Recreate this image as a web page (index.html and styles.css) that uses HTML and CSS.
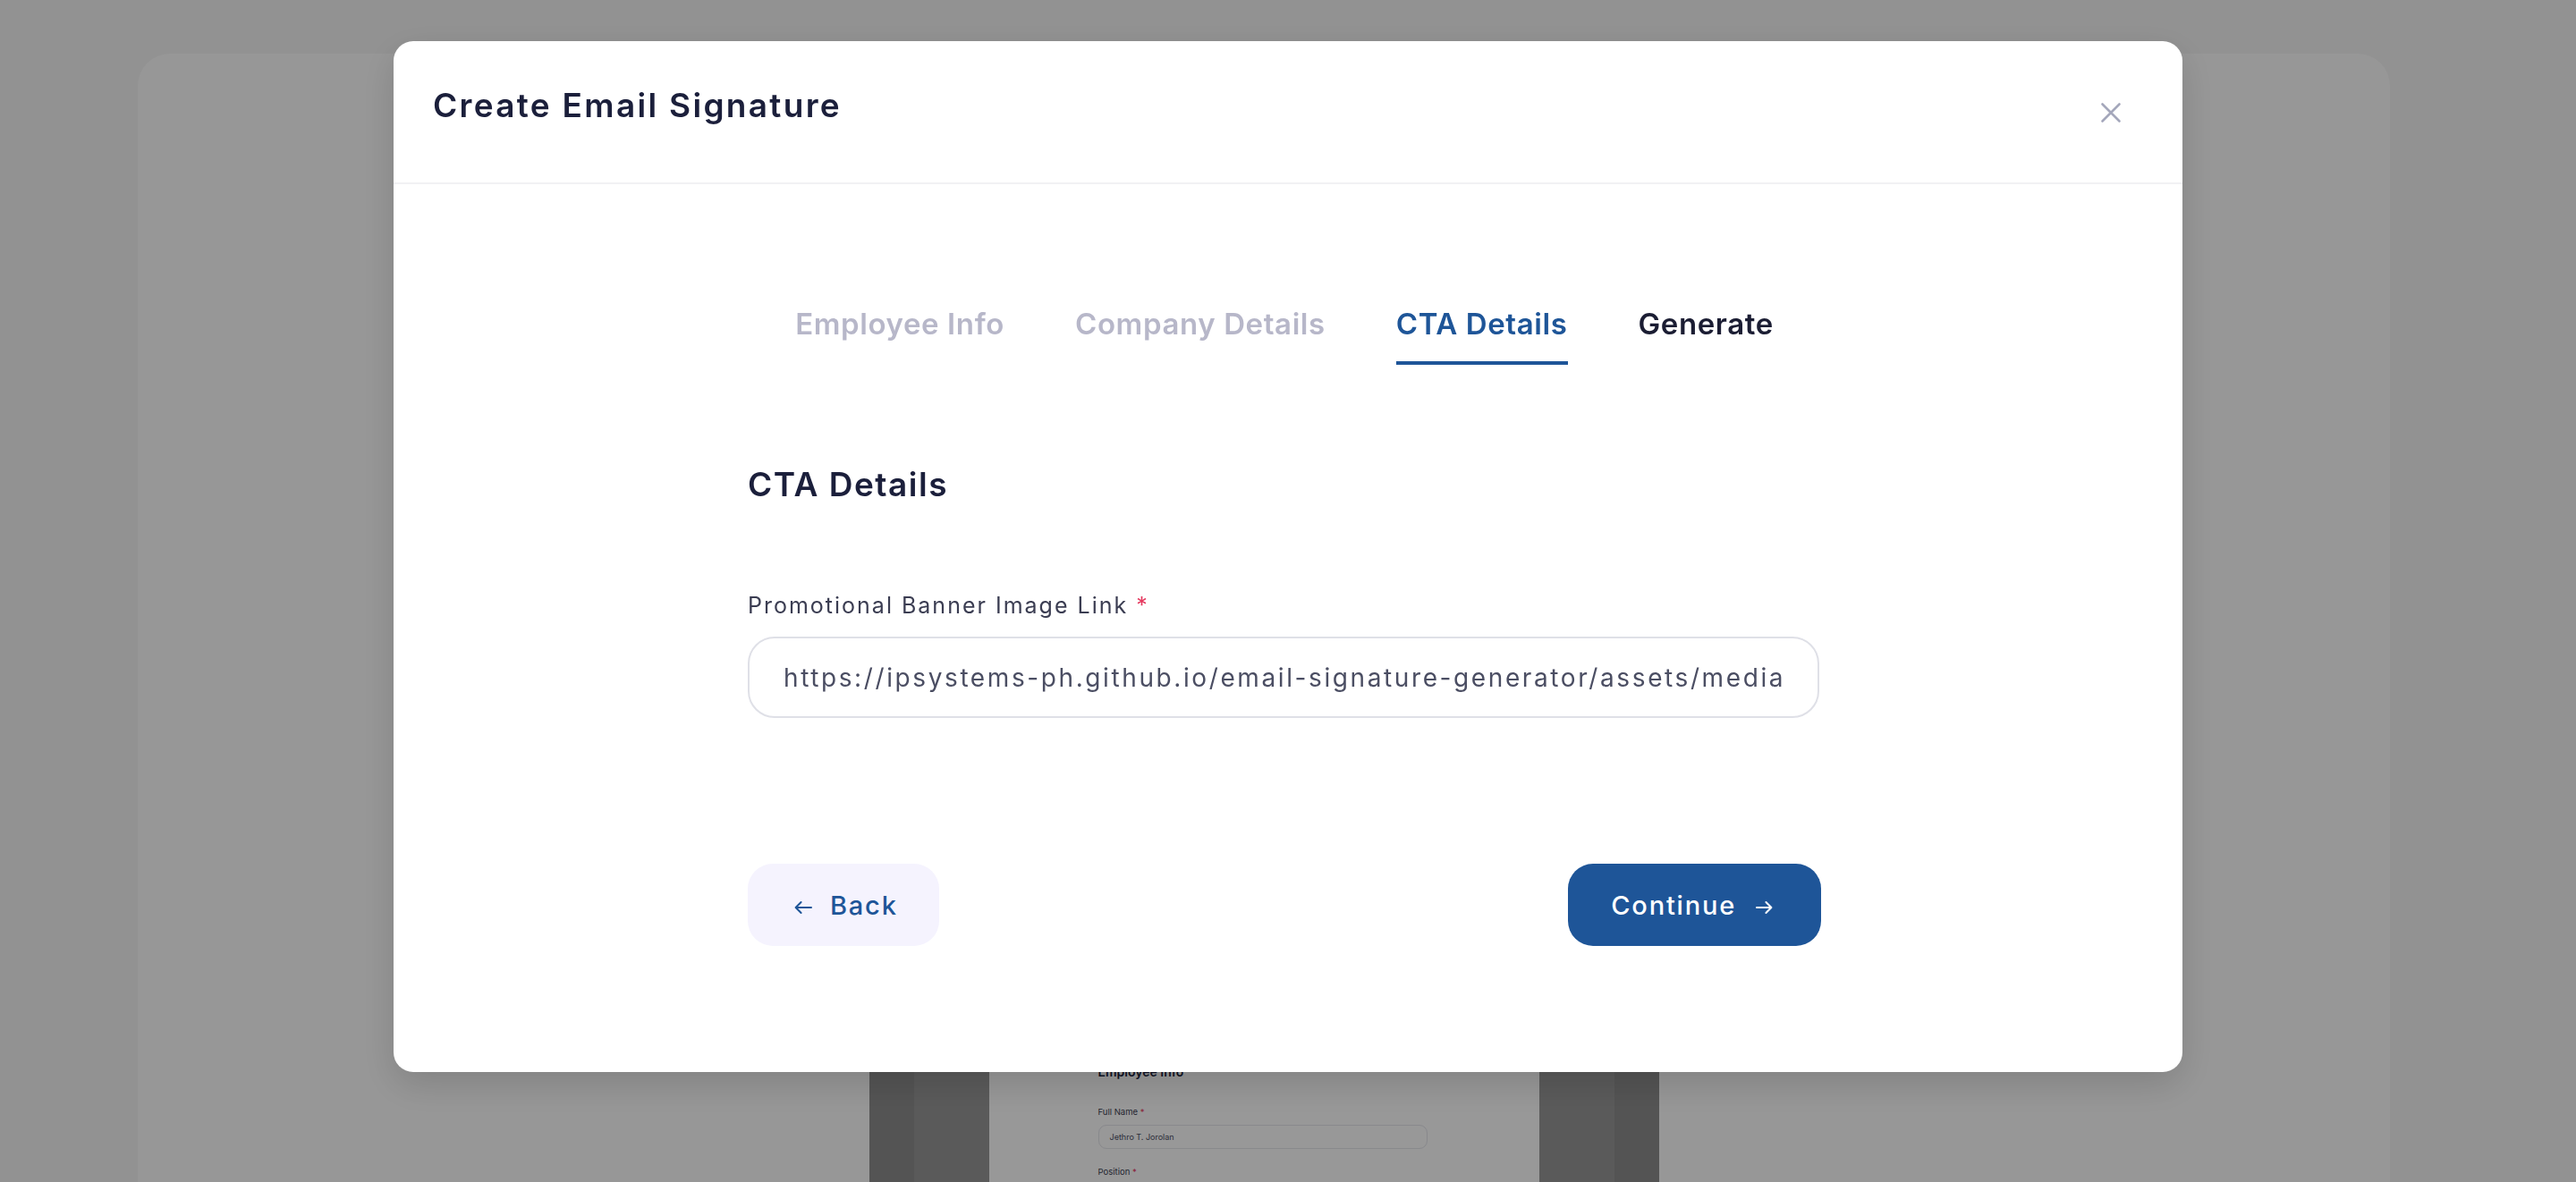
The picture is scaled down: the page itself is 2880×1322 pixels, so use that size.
FILE: index.html
```html
<!DOCTYPE html>
<html lang="en">
<head>
<meta charset="utf-8">
<title>Create Email Signature</title>
<link rel="stylesheet" href="styles.css">
</head>
<body>
<div class="page">
  <div class="card">
    <div class="preview">
      <div class="strip strip-outer"></div>
      <div class="strip strip-inner"></div>
      <div class="paper">
        <div class="p-heading">Employee Info</div>
        <div class="p-label">Full Name <span class="p-req">*</span></div>
        <div class="p-input">Jethro T. Jorolan</div>
        <div class="p-label p-label-2">Position <span class="p-req">*</span></div>
      </div>
      <div class="strip strip-inner"></div>
      <div class="strip strip-outer"></div>
    </div>
  </div>
</div>

<div class="overlay">
  <div class="modal">
    <div class="modal-header">
      <h2 class="modal-title">Create Email Signature</h2>
      <button class="close-btn" aria-label="Close">
        <svg width="24" height="24" viewBox="0 0 24 24"><path d="M2.5 2.5L21.5 21.5M21.5 2.5L2.5 21.5" stroke="#a4a7bb" stroke-width="2.6" stroke-linecap="round" fill="none"/></svg>
      </button>
    </div>
    <div class="modal-body">
      <div class="column">
        <nav class="tabs">
          <span class="tab tab-done">Employee Info</span>
          <span class="tab tab-done">Company Details</span>
          <span class="tab tab-active">CTA Details</span>
          <span class="tab tab-next">Generate</span>
        </nav>
        <h3 class="section-title">CTA Details</h3>
        <label class="field-label" for="banner">Promotional Banner Image Link <span class="req">*</span></label>
        <input class="field-input" id="banner" type="text" value="https://ipsystems-ph.github.io/email-signature-generator/assets/media/banner.png">
        <div class="actions">
          <button class="btn btn-back">
            <svg class="btn-icon" width="20" height="16" viewBox="0 0 20 16"><path d="M19 8H1.8M7.6 2L1.6 8L7.6 14" stroke="#1e5598" stroke-width="2" stroke-linecap="round" stroke-linejoin="round" fill="none"/></svg>
            <span>Back</span>
          </button>
          <button class="btn btn-continue">
            <span>Continue</span>
            <svg class="btn-icon" width="19" height="16" viewBox="0 0 19 16"><path d="M1 8H17.2M11.4 2L17.4 8L11.4 14" stroke="#ffffff" stroke-width="2" stroke-linecap="round" stroke-linejoin="round" fill="none"/></svg>
          </button>
        </div>
      </div>
    </div>
  </div>
</div>
</body>
</html>
```

FILE: styles.css
```css
* {
  box-sizing: border-box;
}

html, body {
  margin: 0;
  padding: 0;
  height: 100%;
  overflow: hidden;
}

body {
  background: #f3f3f3;
  font-family: Inter, "Noto Sans", "Liberation Sans", sans-serif;
}

/* background page */
.page {
  padding: 60px 208px 0 154px;
}

.card {
  background: #fcfcfc;
  border-radius: 36px 36px 0 0;
  height: 1262px;
  padding-top: 1131px;
}

.preview {
  display: flex;
  justify-content: center;
  height: 131px;
}

.strip-outer {
  width: 50px;
  background: #8d8d8d;
}

.strip-inner {
  width: 84px;
  background: #979797;
}

.paper {
  width: 615px;
  background: #fdfdfd;
  padding-left: 122px;
  color: #3b3d52;
}

.p-heading {
  font-weight: 600;
  font-size: 14px;
  line-height: 16px;
  color: #1b1f3b;
}

.p-label {
  margin-top: 31px;
  font-size: 9.5px;
  line-height: 12px;
  color: #3b3d52;
}

.p-label-2 {
  margin-top: 20px;
}

.p-req {
  color: #e5395f;
}

.p-input {
  margin-top: 8px;
  width: 368px;
  height: 27px;
  border: 1px solid #e3e4ea;
  border-radius: 9px;
  padding-left: 12px;
  font-size: 9px;
  line-height: 25px;
  color: #4b4e63;
}

/* overlay + modal */
.overlay {
  position: fixed;
  inset: 0;
  background: rgba(0, 0, 0, 0.4);
  display: flex;
  justify-content: center;
  align-items: flex-start;
  padding-top: 46px;
}

.modal {
  width: 2000px;
  background: #ffffff;
  border-radius: 22px;
  box-shadow: 0 14px 40px rgba(0, 0, 0, 0.14);
}

.modal-header {
  display: flex;
  justify-content: space-between;
  align-items: flex-start;
  height: 160px;
  padding: 50px 68px 0 44px;
  border-bottom: 2px solid #f1f1f4;
}

.modal-title {
  margin: 0;
  font-weight: 600;
  font-size: 37px;
  line-height: 44px;
  letter-spacing: 2.3px;
  color: #1b1f3b;
}

.close-btn {
  margin-top: 18px;
  width: 24px;
  height: 24px;
  padding: 0;
  border: 0;
  background: none;
  display: block;
}

.close-btn svg {
  display: block;
}

.modal-body {
  padding: 134px 8px 141px 0;
}

.column {
  width: 1200px;
  margin: 0 auto;
}

.tabs {
  display: flex;
  justify-content: center;
  gap: 79px;
}

.tab {
  font-weight: 600;
  font-size: 33px;
  line-height: 44px;
  letter-spacing: 0.6px;
  padding-bottom: 20px;
  border-bottom: 4px solid transparent;
}

.tab-done {
  color: #b7b7c9;
}

.tab-active {
  color: #1e5598;
  border-bottom-color: #1e5598;
}

.tab-next {
  color: #1b1d33;
}

.section-title {
  margin: 112px 0 0;
  font-weight: 600;
  font-size: 37px;
  line-height: 44px;
  letter-spacing: 1.5px;
  color: #1b1f3b;
}

.field-label {
  display: block;
  margin-top: 95px;
  font-weight: 400;
  font-size: 25px;
  line-height: 36px;
  letter-spacing: 2px;
  color: #3b3d52;
}

.req {
  color: #e5395f;
  letter-spacing: 0;
}

.field-input {
  display: block;
  margin-top: 17px;
  width: 1198px;
  height: 91px;
  border: 2px solid #dfe0e7;
  border-radius: 30px;
  padding: 0 40px 0 38px;
  font-family: Inter, "Noto Sans", sans-serif;
  font-size: 28px;
  letter-spacing: 2.6px;
  color: #4b4e63;
  background: #ffffff;
  outline: none;
}

.actions {
  margin-top: 163px;
  display: flex;
  justify-content: space-between;
}

.btn {
  display: inline-flex;
  align-items: center;
  height: 92px;
  border: 0;
  border-radius: 28px;
  font-family: Inter, "Noto Sans", sans-serif;
  font-weight: 500;
  font-size: 29px;
  letter-spacing: 1.8px;
}

.btn-icon {
  display: block;
  transform: translateY(3px);
}

.btn-back {
  background: #f5f3fe;
  color: #1e5598;
  padding: 0 46px 0 52px;
  gap: 20px;
}

.btn-continue {
  background: #1e5598;
  color: #ffffff;
  padding: 0 54px 0 48px;
  gap: 22px;
}
```
